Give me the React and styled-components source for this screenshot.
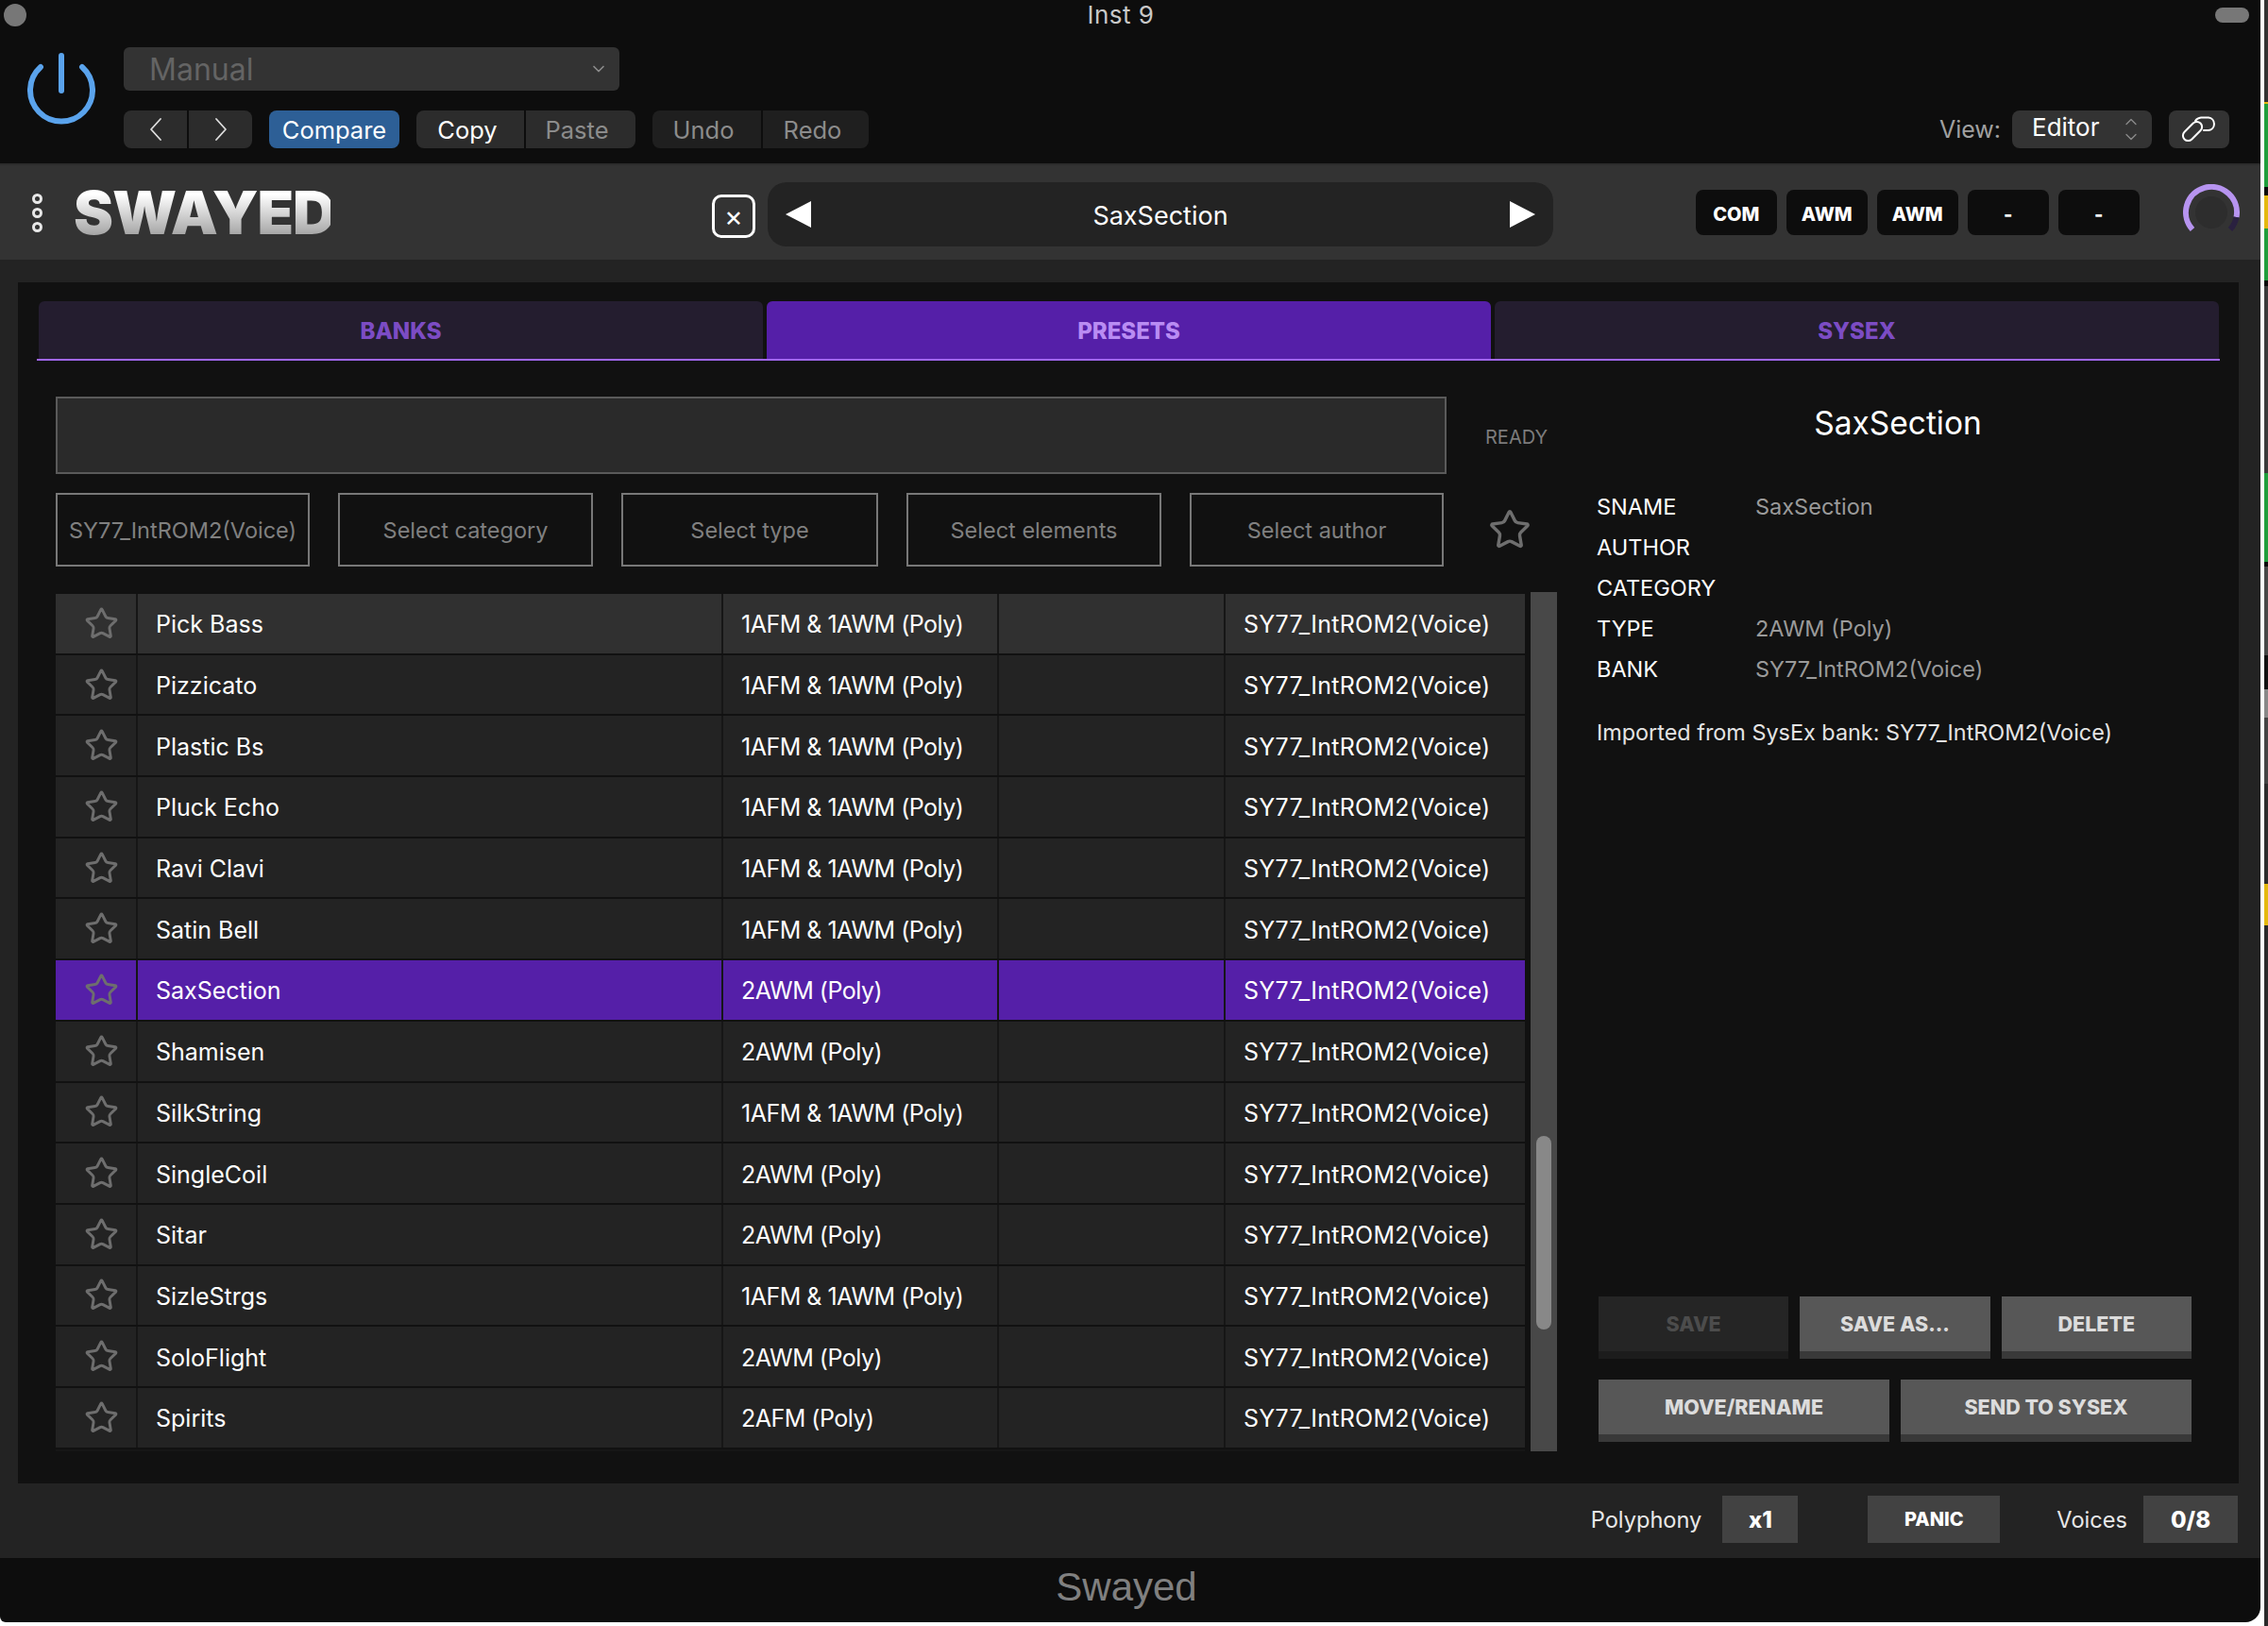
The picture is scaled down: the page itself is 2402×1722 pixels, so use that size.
import React from 'react';
import styled, { createGlobalStyle } from 'styled-components';
import { Star, ChevronDown, ChevronUp } from 'lucide-react';

const GlobalStyle = createGlobalStyle`
  html, body {
    margin: 0;
    padding: 0;
    background: #fff;
    overflow: hidden;
  }
  * { box-sizing: border-box; }
`

const Stage = styled.div`
  display: flex;
  width: 2402px;
  height: 1722px;
  background: #fff;
  font-family: Inter, "Liberation Sans", sans-serif;
`
const Plugin = styled.div`
  display: flex;
  flex-direction: column;
  width: 2394px;
  height: 1718px;
  background: #0d0d0d;
  border-radius: 0 0 16px 6px;
  overflow: hidden;
`
const Backdrop = styled.div`
  display: flex;
  flex-direction: column;
  width: 4px;
  margin-left: 4px;
`
const BackdropBand = styled.div`
  height: ${p => p.$h}px;
  background: ${p => p.$c};
`

/* host window chrome */
const HostBar = styled.header`
  height: 175px;
  flex-shrink: 0;
  border-bottom: 2px solid #2c2c2c;
`
const TitleRow = styled.div`
  display: flex;
  justify-content: space-between;
  align-items: center;
  height: 32px;
  padding: 0 12px 0 4px;
`
const TrafficDot = styled.div`
  width: 24px;
  height: 24px;
  border-radius: 50%;
  background: #777;
`
const TitleText = styled.div`
  color: #c8c8c8;
  font-size: 26px;
  line-height: 32px;
  letter-spacing: 0.5px;
`
const TrafficPill = styled.div`
  width: 36px;
  height: 16px;
  border-radius: 8px;
  background: #777;
`
const HostControls = styled.div`
  display: flex;
  padding: 18px 33px 0 29px;
`
const PowerIcon = styled.svg`
  width: 72px;
  height: 76px;
  margin: 6px 30px 0 0;
  flex-shrink: 0;
`
const HostColumn = styled.div`
  display: flex;
  flex-direction: column;
  gap: 21px;
`
const PresetSelect = styled.div`
  display: flex;
  align-items: center;
  justify-content: space-between;
  width: 525px;
  height: 46px;
  padding: 0 12px 0 27px;
  border-radius: 6px;
  background: #333;
  color: #646464;
  font-size: 32px;
`
const HostButtons = styled.div`
  display: flex;
  gap: 18px;
`
const ButtonGroup = styled.div`
  display: flex;
  gap: 2px;
  height: 40px;
  border-radius: 8px;
  overflow: hidden;
`
const HostButton = styled.div`
  display: flex;
  align-items: center;
  justify-content: center;
  width: ${p => p.$w}px;
  padding-right: ${p => p.$shift || 0}px;
  background: ${p => p.$bg || '#2c2c2c'};
  color: ${p => p.$fg || '#8c8c8c'};
  font-size: 25.5px;
`
const ViewArea = styled.div`
  display: flex;
  align-items: center;
  align-self: flex-end;
  gap: 12px;
  margin-left: auto;
`
const ViewLabel = styled.div`
  color: #a0a0a0;
  font-size: 25px;
`
const ViewSelect = styled.div`
  display: flex;
  align-items: center;
  justify-content: space-between;
  width: 148px;
  height: 40px;
  padding: 0 12px 0 21px;
  border-radius: 8px;
  background: #333;
  color: #fff;
  font-size: 26px;
`
const ViewValue = styled.span`
  padding-bottom: 6px;
`
const UpDown = styled.div`
  display: flex;
  flex-direction: column;
  color: #8c8c8c;
  line-height: 0;
  svg { margin: -2px 0; }
`
const LinkButton = styled.div`
  display: flex;
  align-items: center;
  justify-content: center;
  width: 64px;
  height: 40px;
  margin-left: 6px;
  border-radius: 8px;
  background: #333;
`

/* plugin header */
const PluginHeader = styled.div`
  display: flex;
  align-items: center;
  flex-shrink: 0;
  height: 100px;
  padding-left: 34px;
  background: #333;
`
const DotsMenu = styled.div`
  display: flex;
  flex-direction: column;
  gap: 4px;
  width: 11px;
  margin-right: 33px;
`
const MenuDot = styled.div`
  width: 11px;
  height: 11px;
  border: 3px solid #e8e8e8;
  border-radius: 50%;
`
const Logo = styled.div`
  width: 272px;
  background: linear-gradient(#fff 20%, #a8a8a8 85%);
  -webkit-background-clip: text;
  background-clip: text;
  color: transparent;
  font-size: 63px;
  font-weight: 900;
  line-height: 64px;
  letter-spacing: -1px;
  white-space: nowrap;
`
const ClearButton = styled.div`
  display: flex;
  align-items: center;
  justify-content: center;
  width: 46px;
  height: 46px;
  margin: 8px 13px 0 404px;
  border: 3px solid #fff;
  border-radius: 10px;
  color: #fff;
  font-size: 30px;
  line-height: 1;
`
const PresetBar = styled.div`
  display: flex;
  align-items: center;
  justify-content: space-between;
  width: 832px;
  height: 68px;
  margin-top: 4px;
  padding: 0 19px;
  border-radius: 20px;
  background: #232323;
  color: #fff;
  font-size: 27px;
`
const PresetName = styled.span`
  padding-top: 3px;
`
const Arrow = styled.div`
  width: 0;
  height: 0;
  border-top: 14px solid transparent;
  border-bottom: 14px solid transparent;
  ${p => p.$left ? 'border-right: 27px solid #fff;' : 'border-left: 27px solid #fff;'}
`
const Slots = styled.div`
  display: flex;
  gap: 10.5px;
  margin-left: 151px;
`
const Slot = styled.div`
  display: flex;
  align-items: center;
  justify-content: center;
  width: 85.5px;
  height: 48px;
  padding-top: 3px;
  border-radius: 8px;
  background: #0d0d0d;
  color: #fff;
  font-size: 20px;
  font-weight: 800;
`
const KnobIcon = styled.svg`
  width: 60px;
  height: 60px;
  margin-left: 46px;
`

/* main body */
const Body = styled.div`
  display: flex;
  flex-direction: column;
  height: 1375px;
  flex-shrink: 0;
  padding: 24px 23px 0 19px;
  background: #232323;
`
const Panel = styled.div`
  display: flex;
  flex-direction: column;
  height: 1272px;
  flex-shrink: 0;
  padding: 20px 0 0 20px;
  background: #111;
`
const Tabs = styled.div`
  display: flex;
  gap: 4px;
  width: 2312px;
  padding: 0 1px 0 2px;
  border-bottom: 2px solid #a066ee;
`
const Tab = styled.div`
  display: flex;
  align-items: center;
  justify-content: center;
  flex: 1;
  height: 61px;
  padding-top: 1px;
  border-radius: 6px 6px 0 0;
  background: ${p => p.$active ? '#551fa8' : '#241d2f'};
  color: ${p => p.$active ? '#b98cf3' : '#7c4cc4'};
  font-size: 24px;
  font-weight: 800;
`
const Content = styled.div`
  display: flex;
  flex: 1;
  gap: 42px;
  padding-left: 20px;
`
const BrowserColumn = styled.div`
  display: flex;
  flex-direction: column;
  width: 1590px;
  padding-top: 38px;
`
const SearchRow = styled.div`
  display: flex;
  align-items: center;
  gap: 41px;
`
const SearchBox = styled.div`
  width: 1473px;
  height: 82px;
  border: 2px solid #5a5a5a;
  background: #2a2a2a;
`
const ReadyLabel = styled.div`
  padding-top: 3px;
  color: #7c7c7c;
  font-size: 20px;
`
const FilterRow = styled.div`
  display: flex;
  align-items: center;
  gap: 30px;
  margin-top: 20px;
`
const FilterBox = styled.div`
  display: flex;
  align-items: center;
  justify-content: center;
  width: ${p => p.$w}px;
  height: 78px;
  border: 2px solid #787878;
  color: #808080;
  font-size: 23.5px;
  white-space: nowrap;
`
const FavFilter = styled.div`
  display: flex;
  color: #6e6e6e;
  margin: 0 0 0 17px;
`
const TableArea = styled.div`
  display: flex;
  gap: 6px;
  margin-top: 27px;
`
const PresetList = styled.div`
  width: 1556px;
  height: 908px;
  margin-top: 2px;
  overflow: hidden;
`
const Row = styled.div`
  display: grid;
  grid-template-columns: 85px 618px 290px 238px 317px;
  column-gap: 2px;
  height: 62.7px;
  margin-bottom: 2px;
  background: #161616;
`
const Cell = styled.div`
  display: flex;
  align-items: center;
  padding: 2px 0 0 19px;
  background: ${p => p.$selected ? '#551fa8' : p.$hover ? '#303030' : '#232323'};
  color: #fff;
  font-size: 25px;
  letter-spacing: ${p => p.$track || 0}px;
  white-space: nowrap;
`
const StarCell = styled(Cell)`
  justify-content: center;
  padding: 0 0 0 11px;
  color: #6e6e6e;
`
const ScrollTrack = styled.div`
  display: flex;
  flex-direction: column;
  justify-content: flex-end;
  width: 28px;
  height: 910px;
  padding: 0 6px 129px;
  background: #484848;
`
const ScrollThumb = styled.div`
  height: 205px;
  border-radius: 8px;
  background: #888;
`

/* preset details */
const DetailColumn = styled.div`
  display: flex;
  flex-direction: column;
  width: 630px;
  padding-bottom: 44px;
`
const DetailTitle = styled.div`
  margin-top: 44px;
  padding-left: 8px;
  color: #fff;
  font-size: 33.5px;
  line-height: 44px;
  text-align: center;
`
const DetailRows = styled.div`
  margin-top: 45px;
`
const DetailRow = styled.div`
  display: flex;
  align-items: center;
  height: 43px;
  font-size: 23.5px;
`
const DetailKey = styled.div`
  width: 168px;
  color: #fff;
`
const DetailValue = styled.div`
  color: #9a9a9a;
`
const Description = styled.div`
  margin-top: 24px;
  color: #e4e4e4;
  font-size: 23.4px;
  line-height: 44px;
`
const ActionRows = styled.div`
  display: flex;
  flex-direction: column;
  gap: 22px;
  margin-top: auto;
  padding-left: 2px;
`
const ActionRow = styled.div`
  display: flex;
  gap: 12px;
`
const ActionButton = styled.div`
  display: flex;
  align-items: center;
  justify-content: center;
  flex: 1;
  height: 66px;
  border-bottom: 8px solid ${p => p.$disabled ? '#1c1c1c' : '#393939'};
  background: ${p => p.$disabled ? '#252525' : '#575757'};
  color: ${p => p.$disabled ? '#4c4c4c' : '#dcdcdc'};
  font-size: 21.5px;
  font-weight: 800;
`

/* status bar */
const StatusBar = styled.div`
  display: flex;
  align-items: center;
  justify-content: flex-end;
  flex: 1;
  padding: 0 1px 3px 0;
`
const StatusLabel = styled.div`
  margin-right: ${p => p.$gap}px;
  color: #e8e8e8;
  font-size: 23.6px;
`
const StatusBox = styled.div`
  display: flex;
  align-items: center;
  justify-content: center;
  width: ${p => p.$w}px;
  height: 50px;
  margin-right: ${p => p.$gap || 0}px;
  background: #424242;
  color: #fff;
  font-size: ${p => p.$size || 24}px;
  font-weight: 800;
`
const Footer = styled.footer`
  display: flex;
  align-items: center;
  justify-content: center;
  flex: 1;
  padding: 0 8px 6px 0;
  color: #808080;
  font-family: "Liberation Sans", Arial, sans-serif;
  font-size: 42px;
`

const BANK = 'SY77_IntROM2(Voice)';
const MIXED = '1AFM & 1AWM (Poly)';
const AWM2 = '2AWM (Poly)';

const presets = [
  ['Pick Bass', MIXED],
  ['Pizzicato', MIXED],
  ['Plastic Bs', MIXED],
  ['Pluck Echo', MIXED],
  ['Ravi Clavi', MIXED],
  ['Satin Bell', MIXED],
  ['SaxSection', AWM2],
  ['Shamisen', AWM2],
  ['SilkString', MIXED],
  ['SingleCoil', AWM2],
  ['Sitar', AWM2],
  ['SizleStrgs', MIXED],
  ['SoloFlight', AWM2],
  ['Spirits', '2AFM (Poly)'],
];

const backdrop = [
  [108, '#333'], [2, '#e4b90f'], [88, '#1f9e3c'], [9, '#0a0a0a'], [35, '#e4b90f'],
  [55, '#1f9e3c'], [6, '#0a0a0a'], [198, '#3a3a3a'], [94, '#1f9e3c'], [5, '#0a0a0a'],
  [94, '#484848'], [36, '#111'], [30, '#888'], [70, '#444'], [106, '#2c2c2c'],
  [44, '#e4b90f'], [742, '#2a2a2a'],
];

const filters = [
  [BANK, 269], ['Select category', 270], ['Select type', 272], ['Select elements', 270], ['Select author', 269],
];

const details = [
  ['SNAME', 'SaxSection'], ['AUTHOR', ''], ['CATEGORY', ''], ['TYPE', AWM2], ['BANK', BANK],
];

function NavChevron({ d }) {
  return (
    <svg width="16" height="26" viewBox="0 0 16 26" fill="none" stroke="#ddd" strokeWidth="1.8" strokeLinecap="round" strokeLinejoin="round">
      <path d={d} />
    </svg>
  )
}

function App() {
  return (
    <Stage>
      <GlobalStyle />
      <Plugin>
        <HostBar>
          <TitleRow>
            <TrafficDot />
            <TitleText>Inst 9</TitleText>
            <TrafficPill />
          </TitleRow>
          <HostControls>
            <PowerIcon viewBox="0 0 72 76" fill="none" stroke="#5aa3ec" strokeWidth="6" strokeLinecap="round">
              <path d="M36 3V40" />
              <path d="M14 15A33 33 0 1 0 58 15" />
            </PowerIcon>
            <HostColumn>
              <PresetSelect>
                Manual
                <ChevronDown size={20} color="#8c8c8c" />
              </PresetSelect>
              <HostButtons>
                <ButtonGroup>
                  <HostButton $w={67}><NavChevron d="M13 2L3 13L13 24" /></HostButton>
                  <HostButton $w={67}><NavChevron d="M3 2L13 13L3 24" /></HostButton>
                </ButtonGroup>
                <ButtonGroup>
                  <HostButton $w={138} $bg="#2d5f96" $fg="#fff">Compare</HostButton>
                </ButtonGroup>
                <ButtonGroup>
                  <HostButton $w={114} $fg="#fff" $shift={6}>Copy</HostButton>
                  <HostButton $w={116} $shift={8}>Paste</HostButton>
                </ButtonGroup>
                <ButtonGroup>
                  <HostButton $w={115} $bg="#1f1f1f" $shift={7}>Undo</HostButton>
                  <HostButton $w={112} $bg="#1f1f1f" $shift={7}>Redo</HostButton>
                </ButtonGroup>
              </HostButtons>
            </HostColumn>
            <ViewArea>
              <ViewLabel>View:</ViewLabel>
              <ViewSelect>
                <ViewValue>Editor</ViewValue>
                <UpDown>
                  <ChevronUp size={20} strokeWidth={1.5} />
                  <ChevronDown size={20} strokeWidth={1.5} />
                </UpDown>
              </ViewSelect>
              <LinkButton>
                <svg width="38" height="28" viewBox="0 0 38 28" fill="none" stroke="#fff" strokeWidth="2" strokeLinecap="round">
                  <rect x="0" y="10.5" width="24" height="11" rx="5.5" transform="rotate(-45 12 16)" />
                  <path d="M15 5A8 8 0 0 1 21 1.5H29A6.8 6.8 0 0 1 29 15H24" />
                </svg>
              </LinkButton>
            </ViewArea>
          </HostControls>
        </HostBar>

        <PluginHeader>
          <DotsMenu>
            <MenuDot />
            <MenuDot />
            <MenuDot />
          </DotsMenu>
          <Logo>SWAYED</Logo>
          <ClearButton>×</ClearButton>
          <PresetBar>
            <Arrow $left />
            <PresetName>SaxSection</PresetName>
            <Arrow />
          </PresetBar>
          <Slots>
            {['COM', 'AWM', 'AWM', '-', '-'].map((label, index) => (
              <Slot key={index}>{label}</Slot>
            ))}
          </Slots>
          <KnobIcon viewBox="0 0 60 60" fill="none" strokeWidth="6">
            <circle cx="30" cy="30" r="17" fill="#2d2d2d" />
            <path d="M10 48A27 27 0 1 1 56.5 35" stroke="#b794f0" />
            <path d="M56.5 35A27 27 0 0 1 50 48" stroke="#2a2140" />
          </KnobIcon>
        </PluginHeader>

        <Body>
          <Panel>
            <Tabs>
              <Tab>BANKS</Tab>
              <Tab $active>PRESETS</Tab>
              <Tab>SYSEX</Tab>
            </Tabs>
            <Content>
              <BrowserColumn>
                <SearchRow>
                  <SearchBox />
                  <ReadyLabel>READY</ReadyLabel>
                </SearchRow>
                <FilterRow>
                  {filters.map(([label, width]) => (
                    <FilterBox key={label} $w={width}>{label}</FilterBox>
                  ))}
                  <FavFilter><Star size={46} strokeWidth={1.8} /></FavFilter>
                </FilterRow>
                <TableArea>
                  <PresetList>
                    {presets.map(([name, type], index) => {
                      const selected = name === 'SaxSection';
                      const hover = index === 0;
                      return (
                        <Row key={name}>
                          <StarCell $selected={selected} $hover={hover}>
                            <Star size={37} strokeWidth={1.9} />
                          </StarCell>
                          <Cell $selected={selected} $hover={hover}>{name}</Cell>
                          <Cell $selected={selected} $hover={hover} $track={-0.5}>{type}</Cell>
                          <Cell $selected={selected} $hover={hover} />
                          <Cell $selected={selected} $hover={hover} $track={0.25}>{BANK}</Cell>
                        </Row>
                      )
                    })}
                    <Row />
                  </PresetList>
                  <ScrollTrack>
                    <ScrollThumb />
                  </ScrollTrack>
                </TableArea>
              </BrowserColumn>

              <DetailColumn>
                <DetailTitle>SaxSection</DetailTitle>
                <DetailRows>
                  {details.map(([key, value]) => (
                    <DetailRow key={key}>
                      <DetailKey>{key}</DetailKey>
                      <DetailValue>{value}</DetailValue>
                    </DetailRow>
                  ))}
                </DetailRows>
                <Description>Imported from SysEx bank: {BANK}</Description>
                <ActionRows>
                  <ActionRow>
                    <ActionButton $disabled>SAVE</ActionButton>
                    <ActionButton>SAVE AS...</ActionButton>
                    <ActionButton>DELETE</ActionButton>
                  </ActionRow>
                  <ActionRow>
                    <ActionButton>MOVE/RENAME</ActionButton>
                    <ActionButton>SEND TO SYSEX</ActionButton>
                  </ActionRow>
                </ActionRows>
              </DetailColumn>
            </Content>
          </Panel>
          <StatusBar>
            <StatusLabel $gap={22}>Polyphony</StatusLabel>
            <StatusBox $w={80} $gap={74}>x1</StatusBox>
            <StatusBox $w={140} $gap={60} $size={20}>PANIC</StatusBox>
            <StatusLabel $gap={17}>Voices</StatusLabel>
            <StatusBox $w={100}>0/8</StatusBox>
          </StatusBar>
        </Body>

        <Footer>Swayed</Footer>
      </Plugin>
      <Backdrop>
        {backdrop.map(([height, color], index) => (
          <BackdropBand key={index} $h={height} $c={color} />
        ))}
      </Backdrop>
    </Stage>
  )
}

export default App;
